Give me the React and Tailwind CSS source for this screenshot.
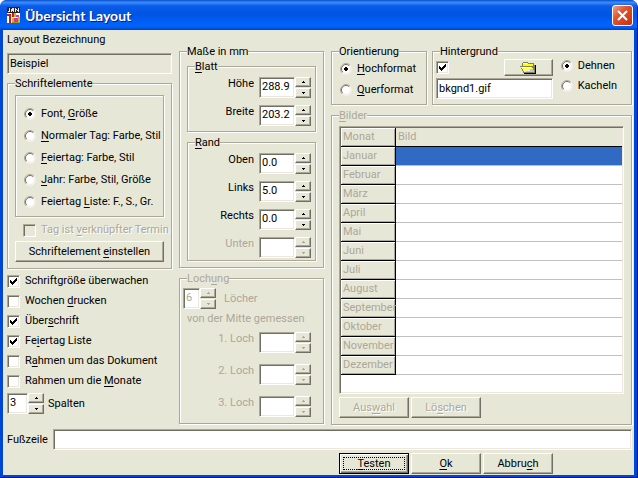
import { clsx } from 'clsx';

const MONTHS = [
  'Januar', 'Februar', 'März', 'April', 'Mai', 'Juni',
  'Juli', 'August', 'September', 'Oktober', 'November', 'Dezember',
];

const SUNKEN =
  'border border-[#aca899] border-r-white border-b-white shadow-[inset_1px_1px_0_#716f64,inset_-1px_-1px_0_#f1e6df]';
const RAISED =
  'border border-white border-r-[#716f64] border-b-[#716f64] shadow-[inset_-1px_-1px_0_#aca899] bg-[#e7e7d7]';

// Wraps the letter after "&" in an underline, like the Windows accelerator keys
function Hot({ text }) {
  const i = text.indexOf('&');
  if (i < 0) return <span>{text}</span>;
  return (
    <span>
      {text.slice(0, i)}
      <u className="underline underline-offset-2">{text[i + 1]}</u>
      {text.slice(i + 2)}
    </span>
  );
}

function Group({ title, disabled, className, inner, children }) {
  return (
    <fieldset
      disabled={disabled}
      className={clsx(
        'min-w-0 border border-[#aca899] shadow-[1px_1px_0_#fff,inset_1px_1px_0_#fff]',
        disabled && 'text-[#aca899]',
        className
      )}
    >
      <legend className="ml-[7px] h-[15px] bg-[#e7e7d7] leading-[15px]">
        <Hot text={title} />
      </legend>
      <div className={inner}>{children}</div>
    </fieldset>
  );
}

function Check({ label, ariaLabel, checked, disabled, className }) {
  return (
    <label className={clsx('flex items-center gap-[5px]', disabled && 'text-[#aca899]', className)}>
      <span className="relative flex">
        <input
          type="checkbox"
          defaultChecked={checked}
          disabled={disabled}
          aria-label={ariaLabel}
          className={clsx('peer size-[13px] appearance-none', SUNKEN, disabled ? 'bg-[#e7e7d7]' : 'bg-white')}
        />
        <svg
          className="pointer-events-none absolute inset-0 hidden size-[13px] peer-checked:block"
          viewBox="0 0 13 13"
          shapeRendering="crispEdges"
        >
          <path d="M3 5h1v1h1v1h1v-1h1v-1h1v-1h1v-1h1v3h-1v1h-1v1h-1v1h-1v1h-1v-1h-1v-1h-1z" />
        </svg>
      </span>
      {label && <span className={clsx(disabled && '[text-shadow:1px_1px_0_#fff]')}><Hot text={label} /></span>}
    </label>
  );
}

function Radio({ name, label, checked }) {
  return (
    <label className="flex items-center gap-[5px] whitespace-nowrap">
      <span className="relative flex">
        <input type="radio" name={name} defaultChecked={checked} className="peer size-3 appearance-none" />
        <svg className="pointer-events-none absolute inset-0 size-3" viewBox="0 0 12 12">
          <circle cx="6" cy="6" r="5.5" fill="#fff" />
          <path d="M2.1 9.9A5.5 5.5 0 0 1 9.9 2.1" fill="none" stroke="#aca899" />
          <path d="M2.8 9.2A4.5 4.5 0 0 1 9.2 2.8" fill="none" stroke="#716f64" />
          <path d="M9.2 2.8A4.5 4.5 0 0 1 2.8 9.2" fill="none" stroke="#f1e6df" />
        </svg>
        <svg className="pointer-events-none absolute inset-0 hidden size-3 peer-checked:block" viewBox="0 0 12 12">
          <path d="M5 4h2v1h1v2h-1v1h-2v-1h-1v-2h1z" shapeRendering="crispEdges" />
        </svg>
      </span>
      <Hot text={label} />
    </label>
  );
}

function Button({ label, disabled, focused, className }) {
  return (
    <button
      type="button"
      disabled={disabled}
      className={clsx(
        'flex h-[21px] items-center justify-center',
        focused
          ? 'border border-black bg-[#e7e7d7] p-[3px] shadow-[inset_1px_1px_0_#fff,inset_-1px_-1px_0_#716f64,inset_-2px_-2px_0_#aca899]'
          : RAISED,
        disabled && 'text-[#aca899] [text-shadow:1px_1px_0_#fff]',
        className
      )}
    >
      {focused ? (
        <span className="flex h-full w-full items-center justify-center border border-dotted border-black">
          <Hot text={label} />
        </span>
      ) : (
        <Hot text={label} />
      )}
    </button>
  );
}

function Spin({ id, value, disabled, className }) {
  const arrow = (up) => (
    <button
      type="button"
      aria-label={up ? 'Mehr' : 'Weniger'}
      disabled={disabled}
      className={clsx('flex h-[10px] w-4 items-center justify-center', RAISED)}
    >
      <svg width="3" height="2" viewBox="0 0 3 2" shapeRendering="crispEdges" fill="currentColor">
        <path d={up ? 'M1 0h1v1h1v1h-3v-1h1z' : 'M0 0h3v1h-1v1h-1v-1h-1z'} />
      </svg>
    </button>
  );
  return (
    <span className={clsx('flex', disabled && 'text-[#aca899]')}>
      <input
        id={id}
        type="text"
        defaultValue={value}
        disabled={disabled}
        className={clsx('h-[21px] bg-white pb-0.5 pl-0.5', SUNKEN, className)}
      />
      <span className="flex flex-col gap-px">
        {arrow(true)}
        {arrow(false)}
      </span>
    </span>
  );
}

function SpinRow({ id, label, value, disabled }) {
  return (
    <div className={clsx('flex items-start justify-end gap-[5px] pr-1', disabled && 'text-[#aca899]')}>
      <label htmlFor={id}>{label}</label>
      <Spin id={id} value={value} disabled={disabled} className="w-9" />
    </div>
  );
}

function CalendarIcon() {
  return (
    <svg className="h-4 w-[13px]" viewBox="0 0 13 16" shapeRendering="crispEdges">
      <path fill="#222" d="M0 0h13v6h-13z" />
      <path fill="#e8e8e8" d="M2 1h1v4h-2v-1h1zM5 1h2v4h-1v-1h-1v1h-1v-3h1zM8 1h1v1h1v1h1v-2h1v4h-1v-1h-1v-1h-1v2h-1z" />
      <path fill="#fff" d="M0 6h13v10h-13z" />
      <path fill="#d01818" d="M0 7h2v2h-2zM2 7h2v9h-2zM5 6h2v4h-2z" />
      <path fill="#c8b828" d="M7 6h2v4h-2zM5 11h2v4h-2zM11 10h2v5h-2z" />
      <path fill="#d83890" d="M9 8h3v2h-3zM7 11h4v4h-4z" />
      <path fill="#a09818" d="M5 15h8v1h-8z" />
    </svg>
  );
}

function FolderIcon() {
  return (
    <svg className="h-3 w-4" viewBox="0 0 16 12" shapeRendering="crispEdges">
      <path fill="#808060" d="M3 0h5v1h6v2h1v8h-12v-2h-1v-2h-1v-2h-1v-1h2v-3h1z" />
      <path fill="#ffff00" d="M3 1h5v1h5v2h-10z" />
      <path fill="#ffff40" d="M1 5h11v1h1v2h1v2h-10v-1h-1v-2h-1v-1h-1z" />
      <path fill="#fff" d="M3 1h4v1h-4zM2 5h9v1h-9zM5 7h1v1h-1zM7 7h1v1h-1zM9 7h1v1h-1zM6 8h1v1h-1zM8 8h1v1h-1z" />
      <path fill="#c0c0e8" d="M10 7h3v1h1v2h-8v-1h4z" />
      <path fill="#000" d="M15 3h1v9h-12v-1h11z" />
    </svg>
  );
}

function TitleBar() {
  return (
    <header className="flex h-[30px] items-center gap-[5px] rounded-t-md bg-[linear-gradient(#0a50c8_0%,#3a8cff_8%,#0a5ce8_20%,#0054e3_50%,#0062fa_80%,#0062fa_90%,#0040b8_100%)] pr-1 pl-[7px]">
      <CalendarIcon />
      <h1 className="flex-1 pt-0.5 font-[Lato,sans-serif] text-[14px] font-bold text-white [text-shadow:1px_1px_0_#0a1883]">
        Übersicht Layout
      </h1>
      <button
        type="button"
        aria-label="Schließen"
        className="flex size-[21px] items-center justify-center rounded-[3px] border border-white bg-[linear-gradient(135deg,#f0a08a,#e0522c_40%,#c83010)]"
      >
        <svg className="size-[13px]" viewBox="0 0 13 13">
          <path d="M2 2l9 9M11 2l-9 9" stroke="#fff" strokeWidth="2" />
        </svg>
      </button>
    </header>
  );
}

function LeftColumn() {
  return (
    <div className="flex w-[165px] shrink-0 flex-col">
      <label htmlFor="bezeichnung" className="mt-[3px]">Layout Bezeichnung</label>
      <input
        id="bezeichnung"
        type="text"
        readOnly
        defaultValue="Beispiel"
        className={clsx('mt-1.5 h-[21px] bg-[#e7e7d7] pl-0.5', SUNKEN)}
      />
      <Group title="Schriftelemente" className="mt-0.5" inner="px-[7px] pb-1.5">
        <div className="mt-1 flex flex-col gap-2 border border-[#aca899] pt-[11px] pb-[7px] pl-2 shadow-[1px_1px_0_#fff,inset_1px_1px_0_#fff]">
          <Radio name="element" label="Font, &Größe" checked />
          <Radio name="element" label="&Normaler Tag: Farbe, Stil" />
          <Radio name="element" label="&Feiertag: Farbe, Stil" />
          <Radio name="element" label="&Jahr: Farbe, Stil, Größe" />
          <Radio name="element" label="Feiertag &Liste: F., S., Gr." />
        </div>
        <Check label="Tag ist &verknüpfter Termin" disabled className="mt-1.5 ml-2 whitespace-nowrap" />
        <Button label="Schriftelement &einstellen" className="mt-1 w-full" />
      </Group>
      <div className="mt-[5px] flex flex-col gap-1.5 whitespace-nowrap">
        <Check label="Schriftgröße überwachen" checked />
        <Check label="Wochen &drucken" />
        <Check label="Über&schrift" checked />
        <Check label="Fe&iertag Liste" checked />
        <Check label="R&ahmen um das Dokument" />
        <Check label="Rahmen um die &Monate" />
      </div>
      <div className="mt-[5px] flex items-center gap-1">
        <Spin id="spalten" value="3" className="w-[21px]" />
        <label htmlFor="spalten">Spalten</label>
      </div>
    </div>
  );
}

function MiddleColumn() {
  return (
    <div className="flex w-[145px] shrink-0 flex-col pt-3.5">
      <Group title="Maße in mm" inner="px-[7px] pb-1.5">
        <Group title="&Blatt" inner="pt-[3px] pb-[5px]">
          <div className="flex flex-col gap-[7px]">
            <SpinRow id="hoehe" label="Höhe" value="288.9" />
            <SpinRow id="breite" label="Breite" value="203.2" />
          </div>
        </Group>
        <Group title="&Rand" className="mt-[3px]" inner="pt-[3px] pb-0.5">
          <div className="flex flex-col gap-[7px]">
            <SpinRow id="oben" label="Oben" value="0.0" />
            <SpinRow id="links" label="Links" value="5.0" />
            <SpinRow id="rechts" label="Rechts" value="0.0" />
            <SpinRow id="unten" label="Unten" disabled />
          </div>
        </Group>
      </Group>
      <Group title="Loch&ung" disabled className="mt-[3px]" inner="pt-0.5 pr-2 pb-1.5 pl-[3px]">
        <div className="flex items-center gap-2">
          <Spin id="loecher" value="6" disabled className="w-[17px]" />
          <label htmlFor="loecher">Löcher</label>
        </div>
        <p className="mt-[3px] mb-1.5 ml-1 whitespace-nowrap">von der Mitte gemessen</p>
        <div className="flex flex-col gap-[11px]">
          <SpinRow id="loch1" label="1. Loch" disabled />
          <SpinRow id="loch2" label="2. Loch" disabled />
          <SpinRow id="loch3" label="3. Loch" disabled />
        </div>
      </Group>
    </div>
  );
}

function MonthTable() {
  const head =
    'h-[19px] whitespace-nowrap border-r border-b border-black p-0 pl-0.5 text-left font-normal bg-[#e7e7d7] shadow-[inset_1px_1px_0_#fff,inset_-1px_-1px_0_#aca899]';
  return (
    <div className={clsx('bg-white p-px pb-[18px]', SUNKEN)}>
      <table className="w-full table-fixed border-separate border-spacing-0">
        <thead>
          <tr>
            <th className={clsx('w-[55px]', head)}>Monat</th>
            <th className="h-[19px] border-b border-black bg-[#e7e7d7] p-0 pl-0.5 text-left font-normal">Bild</th>
          </tr>
        </thead>
        <tbody>
          {MONTHS.map((month, index) => (
            <tr key={month}>
              <th scope="row" className={head}>{month}</th>
              <td className={clsx('border-b border-[#c0c0c0] p-0', index === 0 && 'bg-[#316ac5]')} />
            </tr>
          ))}
        </tbody>
      </table>
    </div>
  );
}

function RightColumn() {
  return (
    <div className="flex min-w-0 flex-1 flex-col pt-3.5">
      <div className="flex gap-[5px]">
        <Group title="Orientierung" className="h-[61px] w-24 shrink-0" inner="pt-[3px] pl-2">
          <div className="flex flex-col gap-[7px]">
            <Radio name="orientierung" label="&Hochformat" checked />
            <Radio name="orientierung" label="&Querformat" />
          </div>
        </Group>
        <Group title="Hintergrund" className="h-[61px] flex-1" inner="pr-3.5 pl-[3px]">
          <div className="flex gap-2">
            <div className="flex flex-1 flex-col gap-0.5">
              <div className="flex items-center justify-between">
                <Check ariaLabel="Hintergrund verwenden" checked />
                <button type="button" aria-label="Datei öffnen" className={clsx('flex h-[17px] w-[49px] items-center justify-center', RAISED)}>
                  <FolderIcon />
                </button>
              </div>
              <input
                type="text"
                aria-label="Hintergrunddatei"
                defaultValue="bkgnd1.gif"
                className={clsx('h-[21px] w-full bg-white pl-0.5', SUNKEN)}
              />
            </div>
            <div className="flex flex-col gap-1.5">
              <Radio name="modus" label="Dehnen" checked />
              <Radio name="modus" label="Kacheln" />
            </div>
          </div>
        </Group>
      </div>
      <Group title="&Bilder" disabled className="mt-[3px]" inner="px-[7px] pt-[3px] pb-1.5">
        <MonthTable />
        <div className="mt-[3px] flex gap-0.5">
          <Button label="Aus&wahl" disabled className="w-[70px]" />
          <Button label="Lö&schen" disabled className="w-[70px]" />
        </div>
      </Group>
    </div>
  );
}

export default function App() {
  return (
    <div className="flex min-h-screen flex-col rounded-t-lg border-r border-b border-[#00138c] bg-[#0046d5] font-[Roboto,sans-serif] text-[11px] leading-[14px] text-black">
      <TitleBar />
      <main className="mr-[3px] mb-0.5 ml-[3px] flex flex-1 flex-col bg-[#e7e7d7] pr-0.5 pl-1">
        <div className="flex gap-[7px]">
          <LeftColumn />
          <MiddleColumn />
          <RightColumn />
        </div>
        <div className="mt-1 flex items-center gap-[5px]">
          <label htmlFor="fusszeile">Fußzeile</label>
          <input id="fusszeile" type="text" className={clsx('h-[21px] flex-1 bg-white pl-0.5', SUNKEN)} />
        </div>
        <div className="mt-[3px] flex justify-end gap-0.5 pr-[79px]">
          <Button label="&Testen" focused className="w-[70px]" />
          <Button label="&Ok" className="w-[70px]" />
          <Button label="Abbru&ch" className="w-[70px]" />
        </div>
      </main>
    </div>
  );
}
